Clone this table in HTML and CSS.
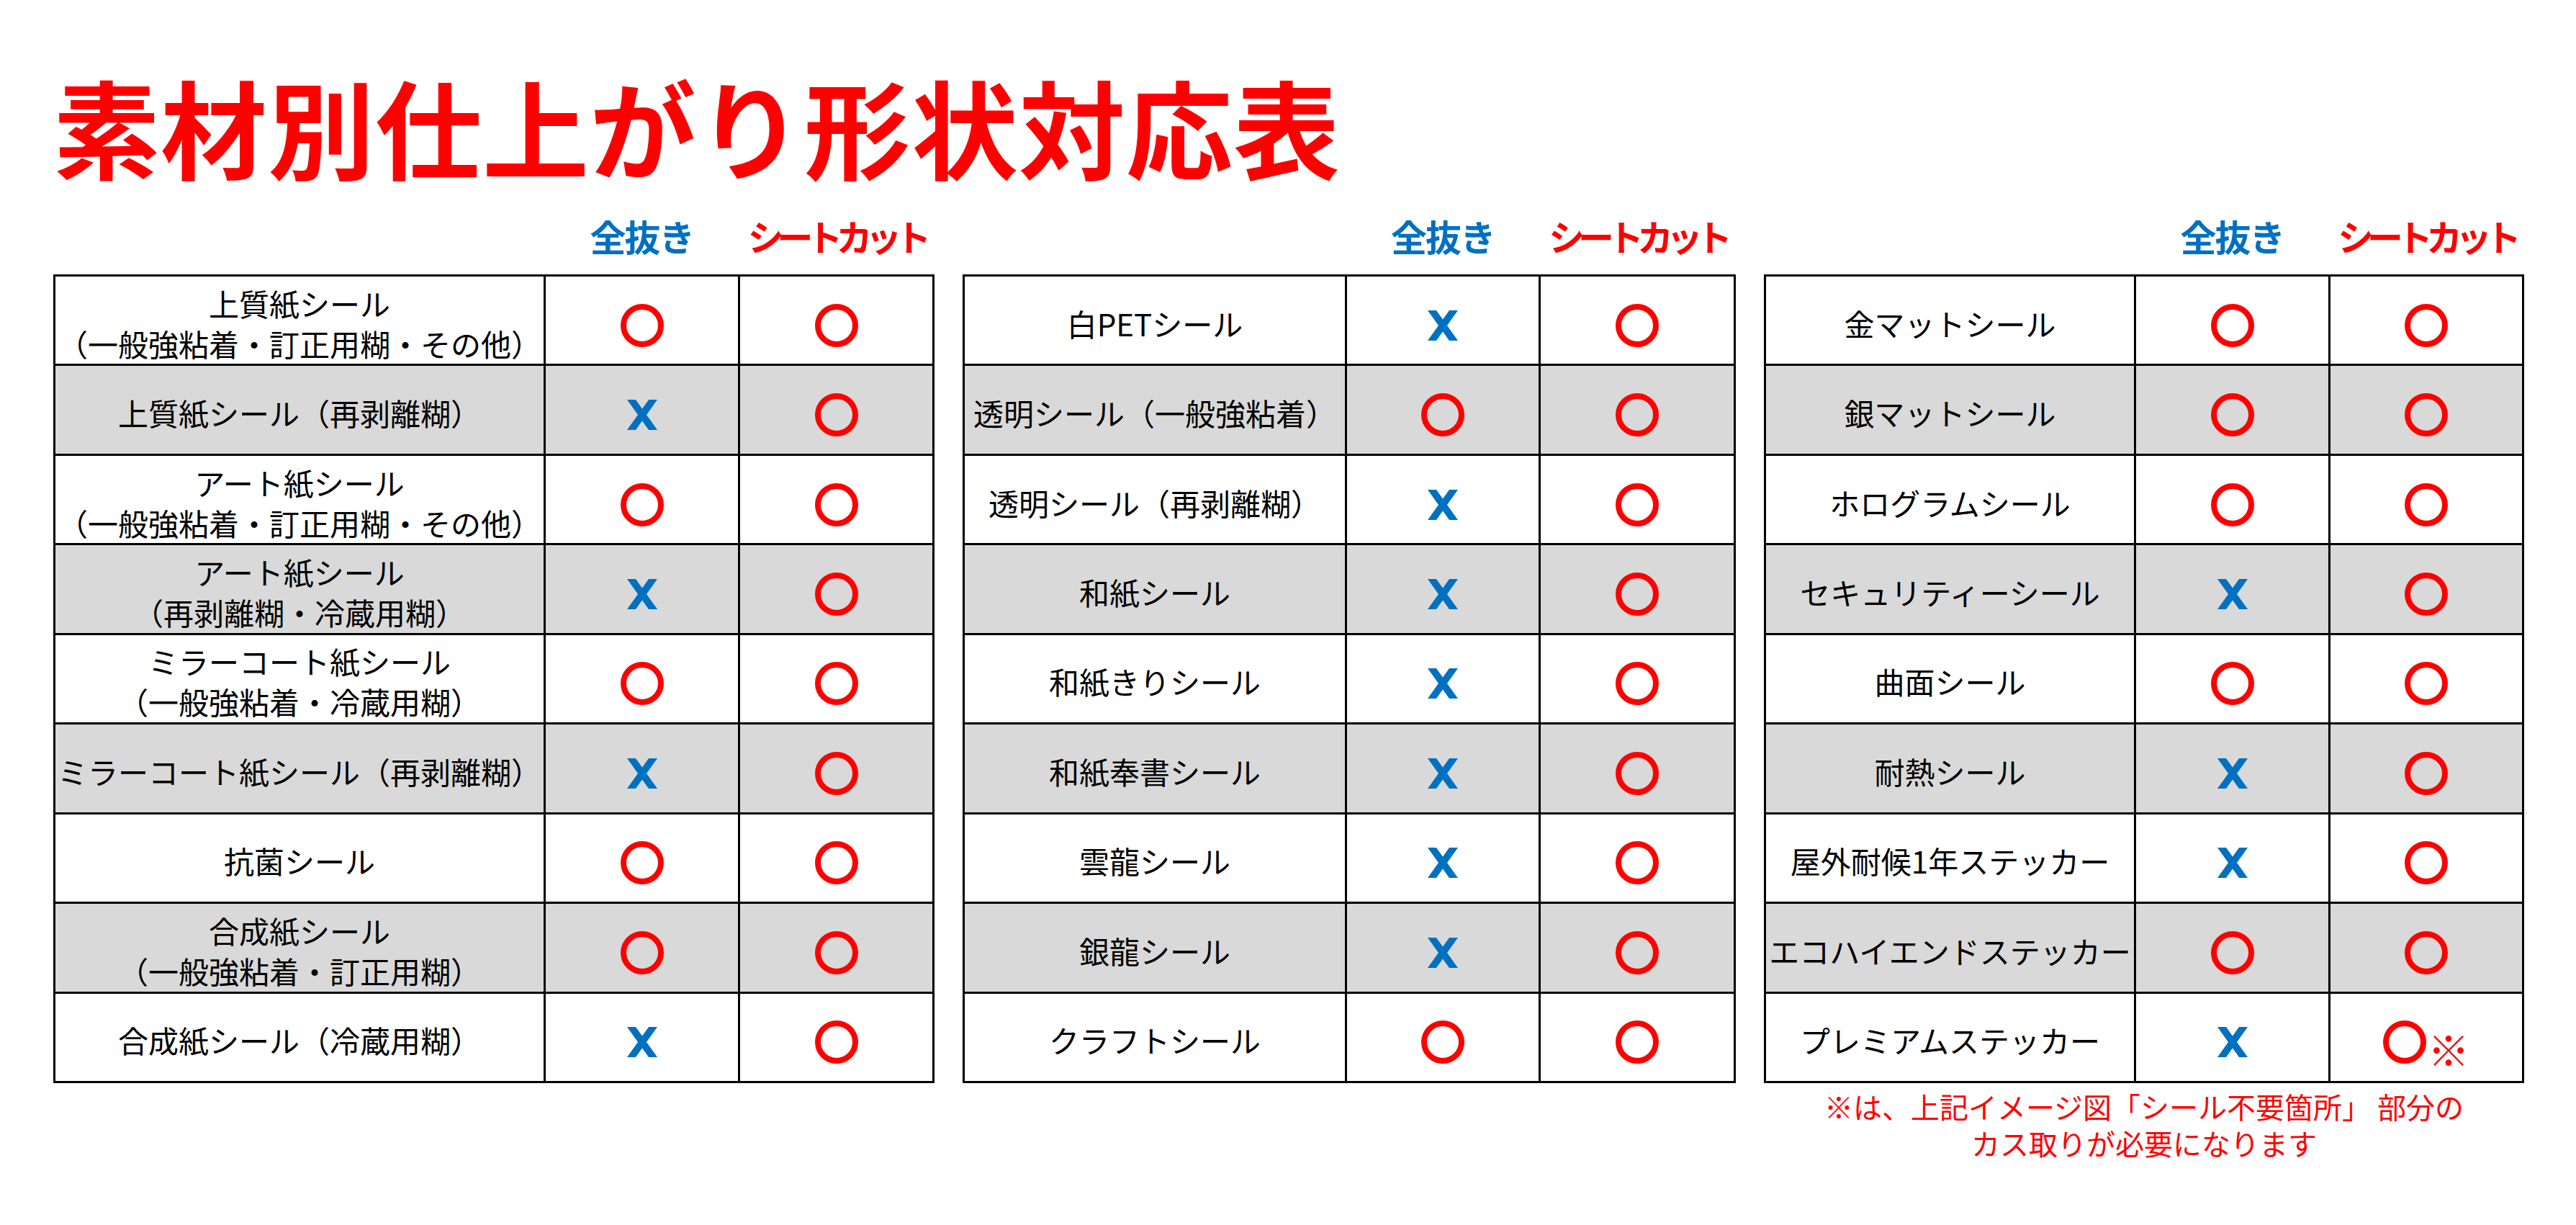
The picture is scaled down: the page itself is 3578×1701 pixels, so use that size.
FILE: index.html
```html
<!DOCTYPE html>
<html lang="ja">
<head>
<meta charset="utf-8">
<title>素材別仕上がり形状対応表</title>
<link rel="stylesheet" href="styles.css">
</head>
<body>
<main class="page">
  <h1 class="title">素材別仕上がり形状対応表</h1>
  <div class="panels">

    <section class="panel panel-1">
      <div class="head cols">
        <div></div><div class="h-nuki">全抜き</div><div class="h-sheet">シートカット</div>
      </div>
      <div class="grid cols">
        <div class="row"><div class="cell label">上質紙シール<br>（一般強粘着・訂正用糊・その他）</div><div class="cell"><span class="mark-o"></span></div><div class="cell"><span class="mark-o"></span></div></div>
        <div class="row"><div class="cell label">上質紙シール（再剥離糊）</div><div class="cell"><svg class="mark-x" viewBox="0 0 42 42"><polygon points="0,0 12,0 42,42 30,42"/><polygon points="30,0 42,0 12,42 0,42"/></svg></div><div class="cell"><span class="mark-o"></span></div></div>
        <div class="row"><div class="cell label">アート紙シール<br>（一般強粘着・訂正用糊・その他）</div><div class="cell"><span class="mark-o"></span></div><div class="cell"><span class="mark-o"></span></div></div>
        <div class="row"><div class="cell label">アート紙シール<br>（再剥離糊・冷蔵用糊）</div><div class="cell"><svg class="mark-x" viewBox="0 0 42 42"><polygon points="0,0 12,0 42,42 30,42"/><polygon points="30,0 42,0 12,42 0,42"/></svg></div><div class="cell"><span class="mark-o"></span></div></div>
        <div class="row"><div class="cell label">ミラーコート紙シール<br>（一般強粘着・冷蔵用糊）</div><div class="cell"><span class="mark-o"></span></div><div class="cell"><span class="mark-o"></span></div></div>
        <div class="row"><div class="cell label">ミラーコート紙シール（再剥離糊）</div><div class="cell"><svg class="mark-x" viewBox="0 0 42 42"><polygon points="0,0 12,0 42,42 30,42"/><polygon points="30,0 42,0 12,42 0,42"/></svg></div><div class="cell"><span class="mark-o"></span></div></div>
        <div class="row"><div class="cell label">抗菌シール</div><div class="cell"><span class="mark-o"></span></div><div class="cell"><span class="mark-o"></span></div></div>
        <div class="row"><div class="cell label">合成紙シール<br>（一般強粘着・訂正用糊）</div><div class="cell"><span class="mark-o"></span></div><div class="cell"><span class="mark-o"></span></div></div>
        <div class="row"><div class="cell label">合成紙シール（冷蔵用糊）</div><div class="cell"><svg class="mark-x" viewBox="0 0 42 42"><polygon points="0,0 12,0 42,42 30,42"/><polygon points="30,0 42,0 12,42 0,42"/></svg></div><div class="cell"><span class="mark-o"></span></div></div>
      </div>
    </section>

    <section class="panel panel-2">
      <div class="head cols">
        <div></div><div class="h-nuki">全抜き</div><div class="h-sheet">シートカット</div>
      </div>
      <div class="grid cols">
        <div class="row"><div class="cell label">白PETシール</div><div class="cell"><svg class="mark-x" viewBox="0 0 42 42"><polygon points="0,0 12,0 42,42 30,42"/><polygon points="30,0 42,0 12,42 0,42"/></svg></div><div class="cell"><span class="mark-o"></span></div></div>
        <div class="row"><div class="cell label">透明シール（一般強粘着）</div><div class="cell"><span class="mark-o"></span></div><div class="cell"><span class="mark-o"></span></div></div>
        <div class="row"><div class="cell label">透明シール（再剥離糊）</div><div class="cell"><svg class="mark-x" viewBox="0 0 42 42"><polygon points="0,0 12,0 42,42 30,42"/><polygon points="30,0 42,0 12,42 0,42"/></svg></div><div class="cell"><span class="mark-o"></span></div></div>
        <div class="row"><div class="cell label">和紙シール</div><div class="cell"><svg class="mark-x" viewBox="0 0 42 42"><polygon points="0,0 12,0 42,42 30,42"/><polygon points="30,0 42,0 12,42 0,42"/></svg></div><div class="cell"><span class="mark-o"></span></div></div>
        <div class="row"><div class="cell label">和紙きりシール</div><div class="cell"><svg class="mark-x" viewBox="0 0 42 42"><polygon points="0,0 12,0 42,42 30,42"/><polygon points="30,0 42,0 12,42 0,42"/></svg></div><div class="cell"><span class="mark-o"></span></div></div>
        <div class="row"><div class="cell label">和紙奉書シール</div><div class="cell"><svg class="mark-x" viewBox="0 0 42 42"><polygon points="0,0 12,0 42,42 30,42"/><polygon points="30,0 42,0 12,42 0,42"/></svg></div><div class="cell"><span class="mark-o"></span></div></div>
        <div class="row"><div class="cell label">雲龍シール</div><div class="cell"><svg class="mark-x" viewBox="0 0 42 42"><polygon points="0,0 12,0 42,42 30,42"/><polygon points="30,0 42,0 12,42 0,42"/></svg></div><div class="cell"><span class="mark-o"></span></div></div>
        <div class="row"><div class="cell label">銀龍シール</div><div class="cell"><svg class="mark-x" viewBox="0 0 42 42"><polygon points="0,0 12,0 42,42 30,42"/><polygon points="30,0 42,0 12,42 0,42"/></svg></div><div class="cell"><span class="mark-o"></span></div></div>
        <div class="row"><div class="cell label">クラフトシール</div><div class="cell"><span class="mark-o"></span></div><div class="cell"><span class="mark-o"></span></div></div>
      </div>
    </section>

    <section class="panel panel-3">
      <div class="head cols">
        <div></div><div class="h-nuki">全抜き</div><div class="h-sheet">シートカット</div>
      </div>
      <div class="grid cols">
        <div class="row"><div class="cell label">金マットシール</div><div class="cell"><span class="mark-o"></span></div><div class="cell"><span class="mark-o"></span></div></div>
        <div class="row"><div class="cell label">銀マットシール</div><div class="cell"><span class="mark-o"></span></div><div class="cell"><span class="mark-o"></span></div></div>
        <div class="row"><div class="cell label">ホログラムシール</div><div class="cell"><span class="mark-o"></span></div><div class="cell"><span class="mark-o"></span></div></div>
        <div class="row"><div class="cell label">セキュリティーシール</div><div class="cell"><svg class="mark-x" viewBox="0 0 42 42"><polygon points="0,0 12,0 42,42 30,42"/><polygon points="30,0 42,0 12,42 0,42"/></svg></div><div class="cell"><span class="mark-o"></span></div></div>
        <div class="row"><div class="cell label">曲面シール</div><div class="cell"><span class="mark-o"></span></div><div class="cell"><span class="mark-o"></span></div></div>
        <div class="row"><div class="cell label">耐熱シール</div><div class="cell"><svg class="mark-x" viewBox="0 0 42 42"><polygon points="0,0 12,0 42,42 30,42"/><polygon points="30,0 42,0 12,42 0,42"/></svg></div><div class="cell"><span class="mark-o"></span></div></div>
        <div class="row"><div class="cell label">屋外耐候1年ステッカー</div><div class="cell"><svg class="mark-x" viewBox="0 0 42 42"><polygon points="0,0 12,0 42,42 30,42"/><polygon points="30,0 42,0 12,42 0,42"/></svg></div><div class="cell"><span class="mark-o"></span></div></div>
        <div class="row"><div class="cell label">エコハイエンドステッカー</div><div class="cell"><span class="mark-o"></span></div><div class="cell"><span class="mark-o"></span></div></div>
        <div class="row"><div class="cell label">プレミアムステッカー</div><div class="cell"><svg class="mark-x" viewBox="0 0 42 42"><polygon points="0,0 12,0 42,42 30,42"/><polygon points="30,0 42,0 12,42 0,42"/></svg></div><div class="cell"><span class="with-note"><span class="mark-o"></span><span class="note-mark">※</span></span></div></div>
      </div>
      <p class="footnote">※は、上記イメージ図「シール不要箇所」 部分の<br>カス取りが必要になります</p>
    </section>

  </div>
</main>
</body>
</html>
```

FILE: styles.css
```css
* { box-sizing: border-box; }

html, body {
  margin: 0;
  padding: 0;
  background: #ffffff;
}

body {
  font-family: "Noto Sans CJK JP", "Noto Sans", sans-serif;
  color: #000000;
  width: 3578px;
  height: 1701px;
  overflow: hidden;
}

.page {
  padding: 100px 0 0 74px;
}

.title {
  margin: 0;
  height: 148px;
  font-size: 148px;
  line-height: 148px;
  font-weight: 700;
  color: #ff0000;
  letter-spacing: 1px;
  white-space: nowrap;
}

.panels {
  display: flex;
  align-items: flex-start;
  gap: 39px;
  margin-top: 49px;
}

.panel {
  display: flex;
  flex-direction: column;
}

.cols {
  display: grid;
  column-gap: 3px;
}

.panel-1 .cols { grid-template-columns: 678px 267px 267px; }
.panel-2 .cols { grid-template-columns: 528px 266px 268px; }
.panel-3 .cols { grid-template-columns: 511px 267px 266px; }

.head {
  height: 84px;
  padding: 0 3px;
  align-items: start;
  font-size: 50px;
  line-height: 60px;
  font-weight: 700;
  text-align: center;
  white-space: nowrap;
}

.h-nuki {
  color: #0070c0;
  letter-spacing: -2px;
}

.h-sheet {
  color: #ff0000;
  letter-spacing: -9px;
}

.grid {
  background: #000000;
  padding: 3px;
  row-gap: 3px;
  grid-template-rows: repeat(9, 121.44px);
}

.row { display: contents; }

.cell {
  background: #ffffff;
  display: flex;
  align-items: center;
  justify-content: center;
  padding-top: 8px;
  text-align: center;
}

.row:nth-child(even) .cell { background: #d9d9d9; }

.label {
  font-size: 42px;
  line-height: 56px;
  white-space: nowrap;
}

.mark-o {
  display: block;
  width: 60px;
  height: 60px;
  border: 8px solid #ff0000;
  border-radius: 50%;
  margin-top: 6px;
}

.mark-x {
  display: block;
  width: 42px;
  height: 42px;
  fill: #0070c0;
  margin-top: 6px;
}

.with-note {
  display: flex;
  align-items: flex-end;
  gap: 2px;
}

.note-mark {
  color: #ff0000;
  font-size: 58px;
  line-height: 58px;
  font-weight: 700;
  margin-bottom: -8px;
}

.footnote {
  margin: 7px 0 0;
  color: #ff0000;
  font-size: 40px;
  line-height: 51px;
  text-align: center;
  white-space: nowrap;
}
```
